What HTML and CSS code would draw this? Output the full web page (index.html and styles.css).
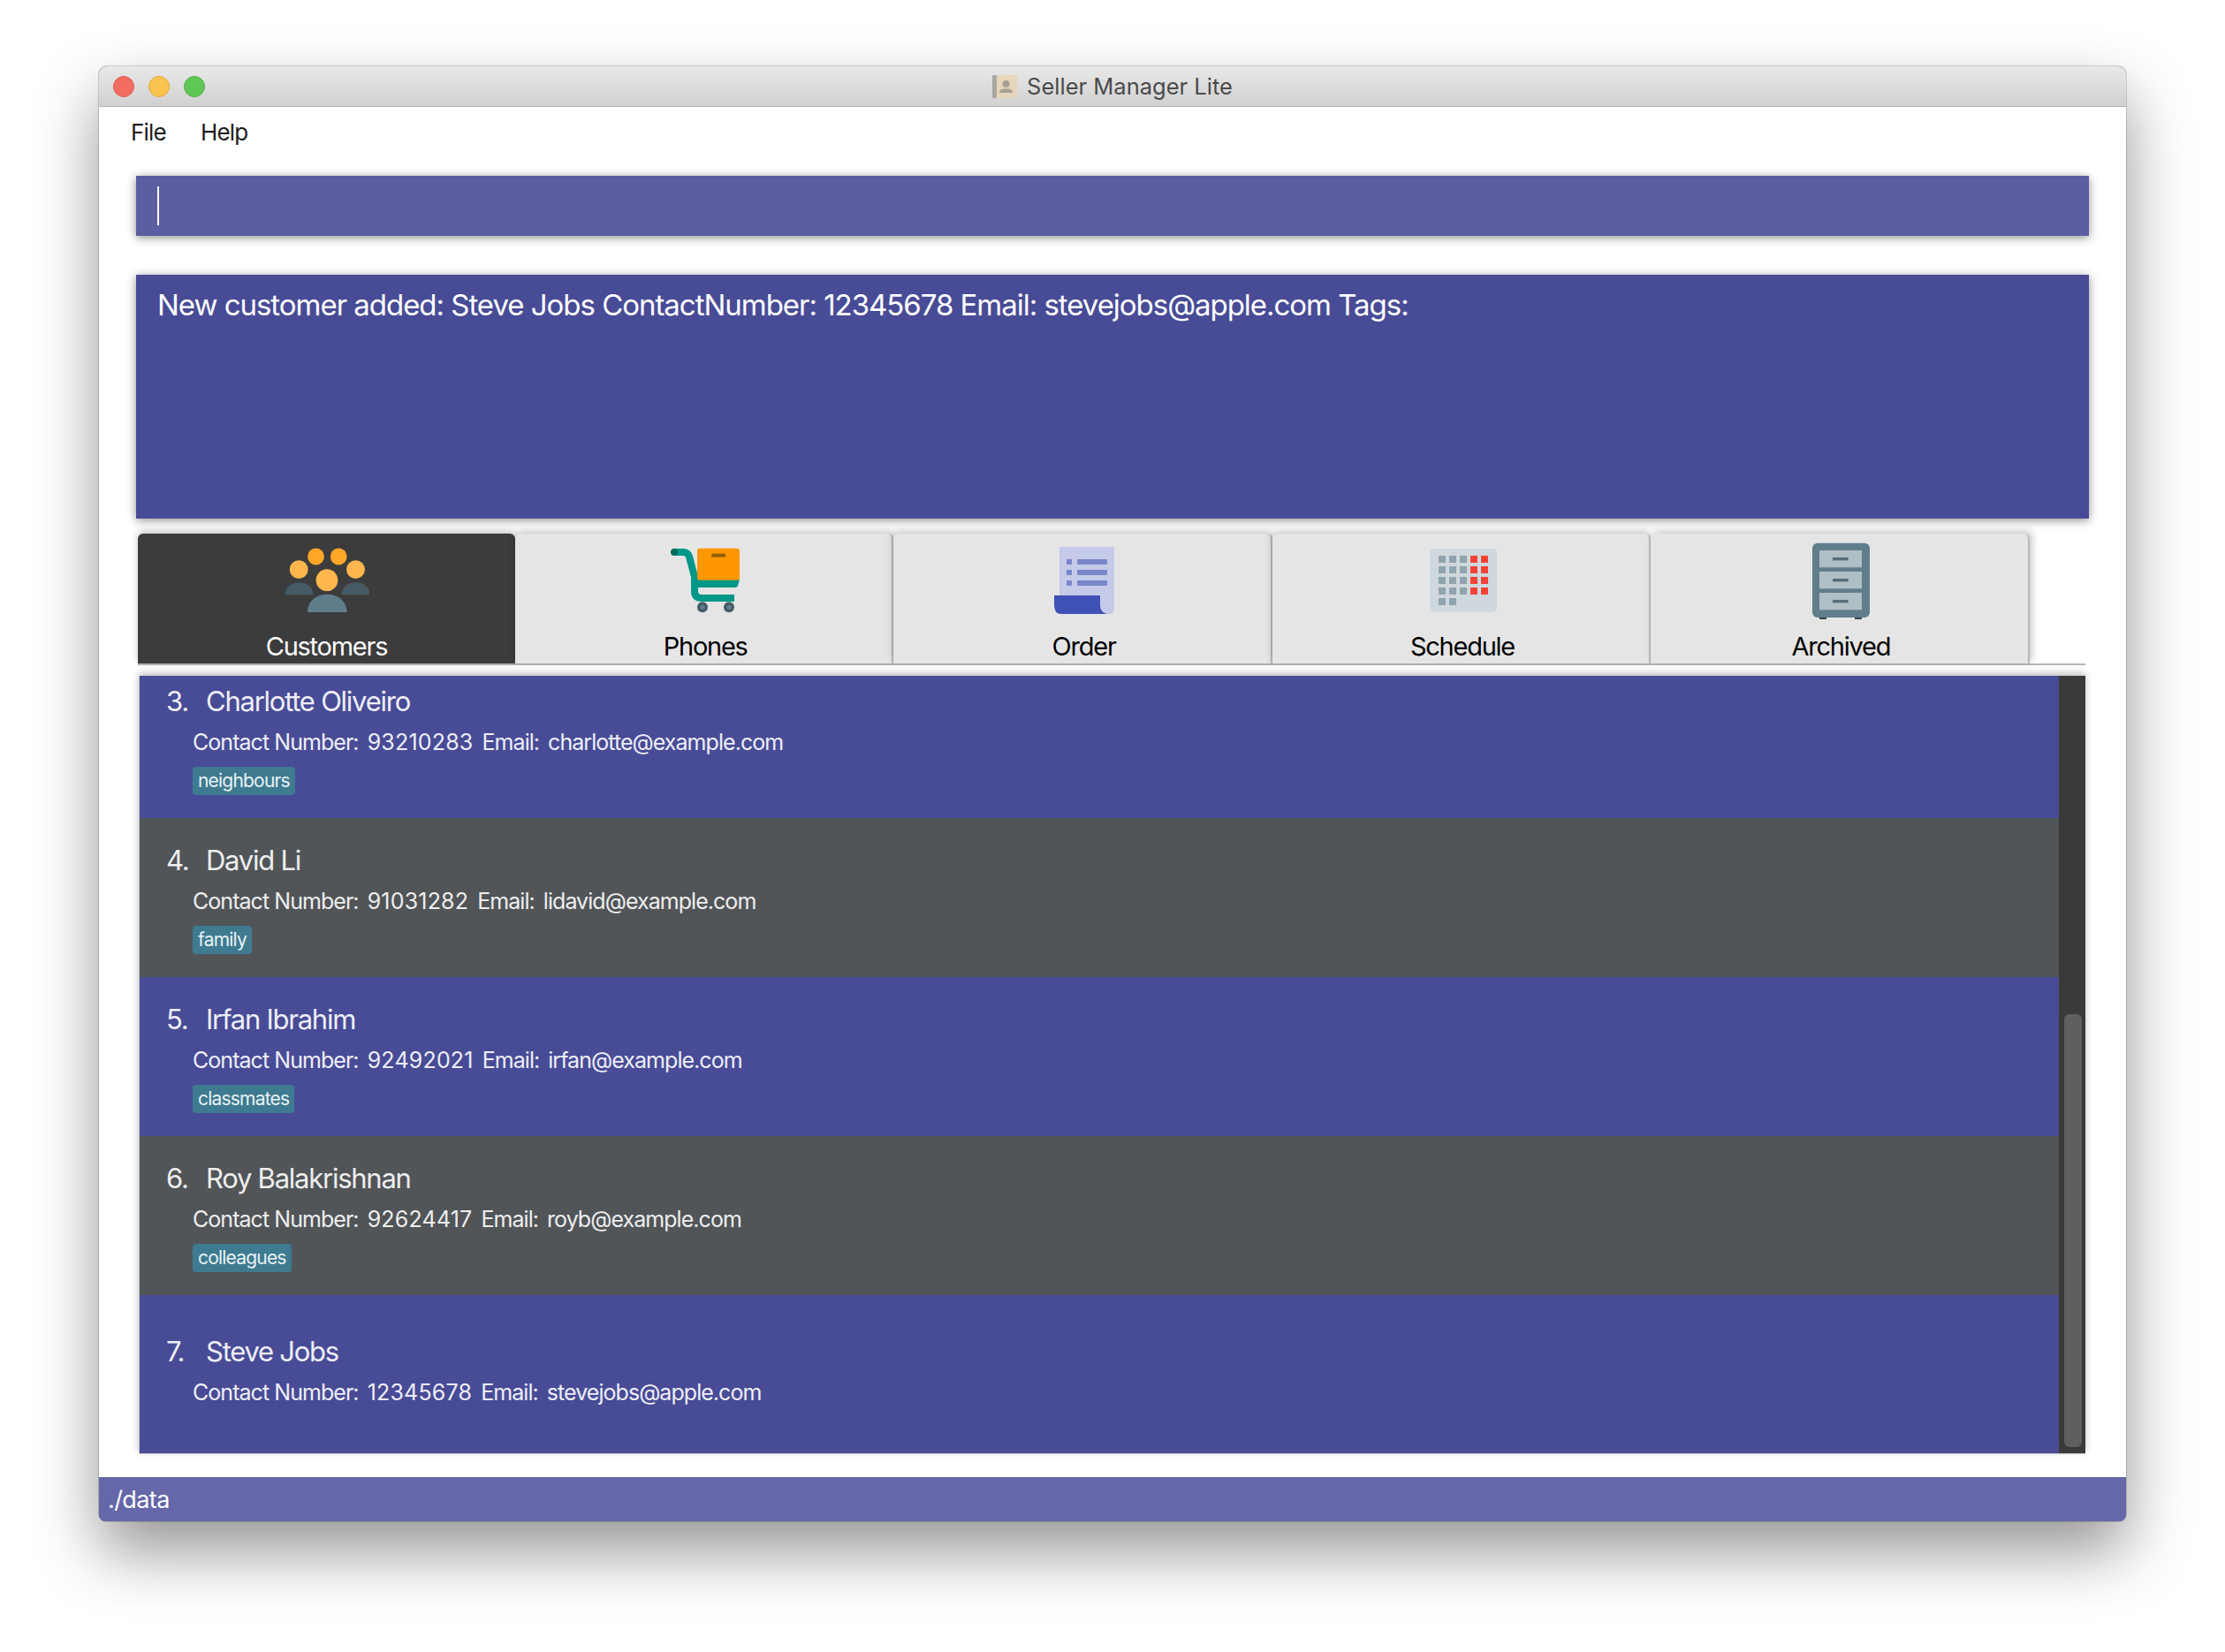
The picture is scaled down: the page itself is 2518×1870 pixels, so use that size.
FILE: index.html
```html
<!DOCTYPE html>
<html lang="en">
<head>
  <title>Seller Manager Lite</title>
  <meta charset="UTF-8">
  <link rel="stylesheet" href="styles.css">
</head>
<body>
  <div class="window">
    <div class="titlebar">
      <div class="lights">
        <span class="light red"></span>
        <span class="light yellow"></span>
        <span class="light green"></span>
      </div>
      <svg class="titleicon" viewBox="0 0 28 26">
        <rect x="0" y="0" width="28" height="26" rx="2" fill="#e6d6ba"/>
        <rect x="0" y="0" width="5" height="26" rx="1" fill="#a9a6a2"/>
        <circle cx="15.5" cy="10" r="4" fill="#a59f94"/>
        <path d="M8 20 Q8 16 13 15.5 H18 Q23 16 23 20 Z" fill="#a59f94"/>
      </svg>
      <span class="titletext">Seller Manager Lite</span>
    </div>

    <div class="content">
      <div class="menubar">
        <span class="menuitem">File</span>
        <span class="menuitem">Help</span>
      </div>

      <div class="command"><span class="caret"></span></div>

      <div class="result">New customer added: Steve Jobs ContactNumber: 12345678 Email: stevejobs@apple.com Tags:</div>

      <!-- tab bar -->
      <div class="tabs">
        <div class="tab active">
          <svg class="tabicon" viewBox="0 0 96 96">
            <circle cx="35.5" cy="21" r="9.4" fill="#ffa726"/>
            <circle cx="61.2" cy="21" r="9.4" fill="#ffa726"/>
            <circle cx="16.2" cy="35.7" r="10.4" fill="#ffb74d"/>
            <circle cx="80.5" cy="35.7" r="10.4" fill="#ffb74d"/>
            <path d="M0.5 64.3 C0.5 45.5 32.5 45.5 32.5 64.3 Z" fill="#455a64"/>
            <path d="M64.5 64.3 C64.5 45.5 96.5 45.5 96.5 64.3 Z" fill="#455a64"/>
            <circle cx="48" cy="47.7" r="12.4" fill="#ffb74d"/>
            <path d="M26 84 C26 57 70.5 57 70.5 84 Z" fill="#607d8b"/>
          </svg>
          <span class="tablabel">Customers</span>
        </div>
        <div class="tab">
          <svg class="tabicon" viewBox="-2 0 96 96">
            <path d="M11 16 H21 C25 16 27 18 28 21 L34 44 V60 Q34 68 42 68 H79" fill="none" stroke="#009688" stroke-width="8"/>
            <path d="M34 47 H85 L83 54 Q82 56 80 56 H34 Z" fill="#009688"/>
            <circle cx="11" cy="16" r="4" fill="#00695c"/>
            <rect x="37" y="11.7" width="48" height="36" rx="3" fill="#ff9800"/>
            <rect x="53.3" y="17.7" width="15.7" height="4" fill="#945f0c"/>
            <circle cx="43" cy="78.3" r="6" fill="#455a64"/>
            <circle cx="43" cy="78.3" r="2.6" fill="#607d8b"/>
            <circle cx="73" cy="78.3" r="6" fill="#455a64"/>
            <circle cx="73" cy="78.3" r="2.6" fill="#607d8b"/>
          </svg>
          <span class="tablabel">Phones</span>
        </div>
        <div class="tab">
          <svg class="tabicon" viewBox="1 0 96 96">
            <path d="M21 10 H83 V80 Q83 86 77 86 H21 Z" fill="#c5cae9"/>
            <rect x="29" y="24" width="6" height="6" rx="1" fill="#7986cb"/>
            <rect x="41" y="24" width="34" height="6" rx="1" fill="#7986cb"/>
            <rect x="29" y="36" width="6" height="6" rx="1" fill="#7986cb"/>
            <rect x="41" y="36" width="34" height="6" rx="1" fill="#7986cb"/>
            <rect x="29" y="48" width="6" height="6" rx="1" fill="#7986cb"/>
            <rect x="41" y="48" width="34" height="6" rx="1" fill="#7986cb"/>
            <path d="M15 65 H67 V76 Q67 84 75 86 H23 Q15 86 15 76 Z" fill="#3f51b5"/>
          </svg>
          <span class="tablabel">Order</span>
        </div>
        <div class="tab">
          <svg class="tabicon" viewBox="1 0 96 96">
            <rect x="12" y="12" width="76" height="72" rx="5" fill="#cfd8dc"/>
            <g fill="#90a4ae">
              <rect x="22" y="20" width="8" height="8"/><rect x="34" y="20" width="8" height="8"/><rect x="46" y="20" width="8" height="8"/>
              <rect x="22" y="32" width="8" height="8"/><rect x="34" y="32" width="8" height="8"/><rect x="46" y="32" width="8" height="8"/>
              <rect x="22" y="44" width="8" height="8"/><rect x="34" y="44" width="8" height="8"/><rect x="46" y="44" width="8" height="8"/>
              <rect x="22" y="56" width="8" height="8"/><rect x="34" y="56" width="8" height="8"/><rect x="46" y="56" width="8" height="8"/>
              <rect x="22" y="68" width="8" height="8"/><rect x="34" y="68" width="8" height="8"/>
            </g>
            <g fill="#f44336">
              <rect x="58" y="20" width="8" height="8"/><rect x="70" y="20" width="8" height="8"/>
              <rect x="58" y="32" width="8" height="8"/><rect x="70" y="32" width="8" height="8"/>
              <rect x="58" y="44" width="8" height="8"/><rect x="70" y="44" width="8" height="8"/>
              <rect x="58" y="56" width="8" height="8"/><rect x="70" y="56" width="8" height="8"/>
            </g>
          </svg>
          <span class="tablabel">Schedule</span>
        </div>
        <div class="tab">
          <svg class="tabicon" viewBox="1 0 96 96">
            <rect x="25" y="88" width="8" height="4" fill="#37474f"/>
            <rect x="65" y="88" width="8" height="4" fill="#37474f"/>
            <rect x="17" y="5.7" width="65" height="84.3" rx="6" fill="#607d8b"/>
            <rect x="25" y="14" width="48" height="19.3" fill="#b0bec5"/>
            <rect x="25" y="38" width="48" height="19.3" fill="#b0bec5"/>
            <rect x="25" y="62" width="48" height="19.3" fill="#b0bec5"/>
            <rect x="40" y="22" width="17.6" height="3.4" fill="#546e7a"/>
            <rect x="40" y="46" width="17.6" height="3.4" fill="#546e7a"/>
            <rect x="40" y="70" width="17.6" height="3.4" fill="#546e7a"/>
          </svg>
          <span class="tablabel">Archived</span>
        </div>
      </div>

      <!-- customer list, scrolled a bit down -->
      <div class="listpane">
        <div class="list">
          <div class="cell odd">
            <div class="name"><span class="index">3.</span><span>Charlotte Oliveiro</span></div>
            <div class="details"><span>Contact Number:</span><span class="phone">93210283</span><span class="email">Email:</span><span>charlotte@example.com</span></div>
            <div class="tags"><span class="tag">neighbours</span></div>
          </div>
          <div class="cell even">
            <div class="name"><span class="index">4.</span><span>David Li</span></div>
            <div class="details"><span>Contact Number:</span><span class="phone">91031282</span><span class="email">Email:</span><span>lidavid@example.com</span></div>
            <div class="tags"><span class="tag">family</span></div>
          </div>
          <div class="cell odd">
            <div class="name"><span class="index">5.</span><span>Irfan Ibrahim</span></div>
            <div class="details"><span>Contact Number:</span><span class="phone">92492021</span><span class="email">Email:</span><span>irfan@example.com</span></div>
            <div class="tags"><span class="tag">classmates</span></div>
          </div>
          <div class="cell even">
            <div class="name"><span class="index">6.</span><span>Roy Balakrishnan</span></div>
            <div class="details"><span>Contact Number:</span><span class="phone">92624417</span><span class="email">Email:</span><span>royb@example.com</span></div>
            <div class="tags"><span class="tag">colleagues</span></div>
          </div>
          <div class="cell odd">
            <div class="name"><span class="index">7.</span><span>Steve Jobs</span></div>
            <div class="details"><span>Contact Number:</span><span class="phone">12345678</span><span class="email">Email:</span><span>stevejobs@apple.com</span></div>
            <div class="tags"></div>
          </div>
        </div>
        <div class="scrollbar"><div class="thumb"></div></div>
      </div>
    </div>

    <div class="status">./data</div>
  </div>
</body>
</html>
```

FILE: styles.css
```css
html, body {
  margin: 0;
  height: 100%;
}
body {
  background-color: #ffffff;
  font-family: Inter, "Liberation Sans", sans-serif;
  padding: 75px 112px 0 112px;
  box-sizing: border-box;
  overflow: hidden;
}
.window {
  height: 1647px;
  display: flex;
  flex-direction: column;
  background-color: #484c96;
  border-radius: 9px 9px 8px 8px;
  box-shadow: 0 0 0 1px rgba(0, 0, 0, 0.16), 0 34px 72px rgba(0, 0, 0, 0.42);
}

/* title bar */
.titlebar {
  height: 45px;
  display: flex;
  align-items: center;
  justify-content: center;
  position: relative;
  background: linear-gradient(#e8e8e8, #d1d1d1);
  border-bottom: 1px solid #b1b1b1;
  border-radius: 9px 9px 0 0;
}
.lights {
  position: absolute;
  left: 16px;
  top: 11px;
  display: flex;
  gap: 16px;
}
.light {
  width: 24px;
  height: 24px;
  border-radius: 50%;
  box-sizing: border-box;
}
.red { background-color: #f36c60; border: 1px solid #df5b50; }
.yellow { background-color: #f9c34e; border: 1px solid #e4a93c; }
.green { background-color: #5fc854; border: 1px solid #52ad48; }
.titleicon {
  width: 28px;
  height: 26px;
  margin-right: 11px;
}
.titletext {
  font-size: 25.5px;
  color: #4a4a4a;
}

/* white part of the window */
.content {
  flex: 1;
  background-color: #ffffff;
  padding: 0 42px;
  display: flex;
  flex-direction: column;
}
.menubar {
  height: 59px;
  display: flex;
  align-items: center;
  gap: 39px;
  margin-left: -6px;
  margin-top: -1px;
}
.menuitem {
  font-size: 26px;
  letter-spacing: -0.8px;
  color: #1c1c1c;
}
.command {
  height: 68px;
  margin-top: 20px;
  background-color: #5b5ea1;
  padding: 12px 24px;
  box-sizing: border-box;
  box-shadow: 0 2px 10px rgba(0, 0, 0, 0.45);
}
.caret {
  display: block;
  width: 2px;
  height: 44px;
  background-color: #ffffff;
}
.result {
  height: 276px;
  margin-top: 44px;
  background-color: #484c96;
  color: #ffffff;
  font-size: 33px;
  letter-spacing: -1.03px;
  line-height: 44px;
  padding: 12px 24px;
  box-sizing: border-box;
  box-shadow: 0 2px 10px rgba(0, 0, 0, 0.45);
}

/* tabs */
.tabs {
  height: 147px;
  margin: 17px 4px 0 2px;
  display: flex;
  border-bottom: 2px solid #b5b5b5;
}
.tab {
  width: 428.4px;
  flex: none;
  display: flex;
  flex-direction: column;
  align-items: center;
  box-sizing: border-box;
  padding: 5px 0 0 4px;
  background-color: #e5e5e5;
  border-right: 2px solid #b9b9b9;
  border-radius: 6px 6px 0 0;
  box-shadow: 0 -3px 8px rgba(0, 0, 0, 0.22);
}
.tab:last-child {
  box-shadow: 3px -3px 8px rgba(0, 0, 0, 0.22);
}
.tab.active {
  width: 427px;
  background-color: #3c3c3c;
  border-right: none;
  padding-left: 0;
}
.tabicon {
  width: 96px;
  height: 96px;
}
.tablabel {
  font-size: 29px;
  letter-spacing: -1.25px;
  line-height: 36px;
  margin-top: 9px;
  color: #000000;
}
.active .tablabel {
  color: #ffffff;
}

/* list */
.listpane {
  height: 881px;
  margin: 12px 4px 0 3px;
  display: flex;
  overflow: hidden;
  flex: none;
  box-shadow: 0 -3px 8px rgba(0, 0, 0, 0.25);
  border-left: 1px solid #c4c4c4;
  border-bottom: 1px solid #c4c4c4;
  box-sizing: border-box;
}
.list {
  flex: 1;
  margin-top: -19px;
}
.cell {
  height: 180px;
  padding-left: 30px;
  display: flex;
  flex-direction: column;
  justify-content: center;
  box-sizing: border-box;
}
.odd { background-color: #484c96; color: #eeeef6; }
.even { background-color: #515558; color: #eeeeee; }
.name {
  display: flex;
  font-size: 31px;
  letter-spacing: -1.25px;
  line-height: 44px;
}
.index {
  width: 45px;
}
.details {
  display: flex;
  gap: 10px;
  margin-top: 7px;
  margin-left: 30px;
  font-size: 25px;
  letter-spacing: -0.95px;
  line-height: 34px;
}
.phone {
  letter-spacing: 0.2px;
}
.tags {
  display: flex;
  margin-top: 11px;
  margin-left: 30px;
}
.tag {
  background-color: #3e7b91;
  color: #e9f2f5;
  font-size: 21px;
  letter-spacing: -0.8px;
  line-height: 32px;
  padding: 0 6px;
  border-radius: 4px;
}
.scrollbar {
  width: 30px;
  background-color: #3a3a3a;
  padding: 383px 4px 7px 6px;
  box-sizing: border-box;
}
.thumb {
  height: 100%;
  background-color: #5f5f5f;
  border-radius: 6px;
}

.status {
  height: 50px;
  background-color: #6567a9;
  color: #ffffff;
  font-size: 27px;
  letter-spacing: -0.6px;
  line-height: 52px;
  padding-left: 10px;
  border-radius: 0 0 8px 8px;
}
```
